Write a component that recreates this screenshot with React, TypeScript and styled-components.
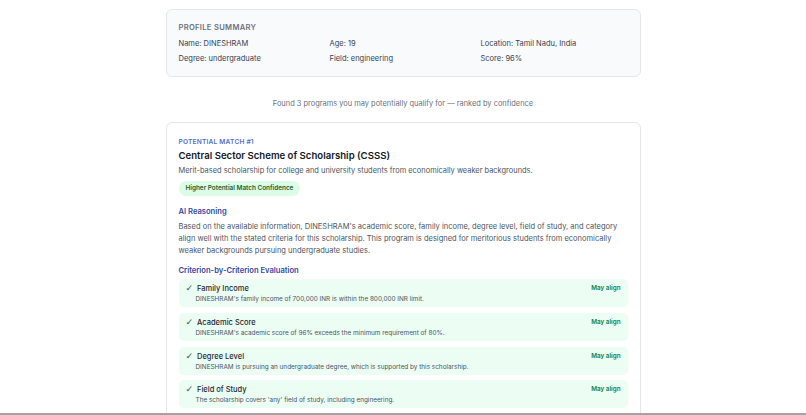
import React from 'react'
import styled, { createGlobalStyle } from 'styled-components'

const GlobalStyle = createGlobalStyle`
  html, body {
    margin: 0;
    padding: 0;
    background: #ffffff;
    font-family: Inter, "Noto Sans", sans-serif;
    color: #1f2937;
    overflow: hidden;
  }
`

const Page = styled.div`
  width: 475px;
  margin: 0 auto;
  padding-top: 9px;
  display: flex;
  flex-direction: column;
`

const SummaryCard = styled.section`
  background: #f8fafc;
  border: 1px solid #e5e7eb;
  border-radius: 6px;
  padding: 13px 12px 12px;
`

const SectionLabel = styled.div`
  font-size: 7.6px;
  font-weight: 600;
  letter-spacing: 0.3px;
  text-transform: uppercase;
  color: #6b7280;
  margin-bottom: 7px;
`

const SummaryGrid = styled.div`
  display: grid;
  grid-template-columns: 151px 151px 1fr;
  row-gap: 5px;
  font-size: 7.5px;
  line-height: 10px;
  color: #374151;
`

const FoundText = styled.p`
  margin: 22px 0 13px;
  text-align: center;
  font-size: 7.45px;
  line-height: 10px;
  color: #6b7280;
`

const MatchCard = styled.section`
  background: #ffffff;
  border: 1px solid #e5e7eb;
  border-radius: 6px;
  padding: 15px 12px 12px;
  display: flex;
  flex-direction: column;
`

const MatchLabel = styled.div`
  font-size: 6.6px;
  font-weight: 600;
  letter-spacing: 0.2px;
  text-transform: uppercase;
  color: #4f6fd6;
  line-height: 9px;
`

const MatchTitle = styled.h2`
  margin: 2px 0 0;
  font-size: 9.6px;
  line-height: 14px;
  font-weight: 600;
  color: #111827;
`

const MatchDesc = styled.p`
  margin: 2px 0 0;
  font-size: 7.45px;
  line-height: 11px;
  color: #4b5563;
`

const Badge = styled.span<{ $tone: 'high' | 'low' }>`
  align-self: flex-start;
  margin-top: 5px;
  padding: 3px 7px;
  border-radius: 999px;
  font-size: 6.4px;
  line-height: 8.5px;
  font-weight: 600;
  background: ${p => (p.$tone === 'high' ? '#dcfce7' : '#fef3c7')};
  color: ${p => (p.$tone === 'high' ? '#166534' : '#92400e')};
`

const SubHeading = styled.h3<{ $gap: number }>`
  margin: ${p => p.$gap}px 0 0;
  font-size: 7.6px;
  line-height: 11px;
  font-weight: 600;
  color: #3147a8;
`

const Reasoning = styled.p`
  margin: 4px 0 0;
  font-size: 7.5px;
  line-height: 12px;
  color: #4b5563;
`

const CriteriaList = styled.div`
  margin-top: 3px;
  display: flex;
  flex-direction: column;
  gap: 5.75px;
`

const CriterionRow = styled.div`
  background: #ecfdf3;
  border-radius: 5px;
  padding: 4px 7px 3px 7px;
  display: flex;
  justify-content: space-between;
  align-items: flex-start;
`

const CriterionMain = styled.div`
  display: flex;
  flex-direction: column;
`

const CriterionTitle = styled.div`
  display: flex;
  align-items: center;
  gap: 4px;
  font-size: 7.5px;
  line-height: 11px;
  font-weight: 500;
  color: #1f2937;
`

const Check = styled.span`
  color: #166534;
  font-size: 9px;
  line-height: 11px;
  font-family: "DejaVu Sans", sans-serif;
`

const CriterionNote = styled.div`
  margin-top: 1px;
  padding-left: 10px;
  font-size: 6.4px;
  line-height: 9px;
  color: #4b5563;
`

const Verdict = styled.span`
  font-size: 6.3px;
  line-height: 11px;
  font-weight: 600;
  color: #15803d;
`

const BottomEdge = styled.div`
  position: fixed;
  left: 0;
  right: 0;
  bottom: 0;
  height: 2px;
  background: #a3a3a3;
`

const profile = [
  'Name: DINESHRAM',
  'Age: 19',
  'Location: Tamil Nadu, India',
  'Degree: undergraduate',
  'Field: engineering',
  'Score: 96%',
]

const criteria = [
  {
    title: 'Family Income',
    note: "DINESHRAM's family income of 700,000 INR is within the 800,000 INR limit.",
  },
  {
    title: 'Academic Score',
    note: "DINESHRAM's academic score of 96% exceeds the minimum requirement of 80%.",
  },
  {
    title: 'Degree Level',
    note: 'DINESHRAM is pursuing an undergraduate degree, which is supported by this scholarship.',
  },
  {
    title: 'Field of Study',
    note: "The scholarship covers 'any' field of study, including engineering.",
  },
]

const App: React.FC = () => {
  return (
    <>
      <GlobalStyle />
      <Page>
        <SummaryCard>
          <SectionLabel>Profile Summary</SectionLabel>
          <SummaryGrid>
            {profile.map(item => (
              <span key={item}>{item}</span>
            ))}
          </SummaryGrid>
        </SummaryCard>

        <FoundText>Found 3 programs you may potentially qualify for — ranked by confidence</FoundText>

        <MatchCard>
          <MatchLabel>Potential Match #1</MatchLabel>
          <MatchTitle>Central Sector Scheme of Scholarship (CSSS)</MatchTitle>
          <MatchDesc>
            Merit-based scholarship for college and university students from economically weaker backgrounds.
          </MatchDesc>
          <Badge $tone="high">Higher Potential Match Confidence</Badge>

          <SubHeading $gap={10.5}>AI Reasoning</SubHeading>
          <Reasoning>
            Based on the available information, DINESHRAM's academic score, family income, degree level, field of
            study, and category align well with the stated criteria for this scholarship. This program is designed
            for meritorious students from economically weaker backgrounds pursuing undergraduate studies.
          </Reasoning>

          <SubHeading $gap={8}>Criterion-by-Criterion Evaluation</SubHeading>
          <CriteriaList>
            {criteria.map(c => (
              <CriterionRow key={c.title}>
                <CriterionMain>
                  <CriterionTitle>
                    <Check>✓</Check>
                    {c.title}
                  </CriterionTitle>
                  <CriterionNote>{c.note}</CriterionNote>
                </CriterionMain>
                <Verdict>May align</Verdict>
              </CriterionRow>
            ))}
          </CriteriaList>
        </MatchCard>
      </Page>
      <BottomEdge />
    </>
  )
}

export default App
